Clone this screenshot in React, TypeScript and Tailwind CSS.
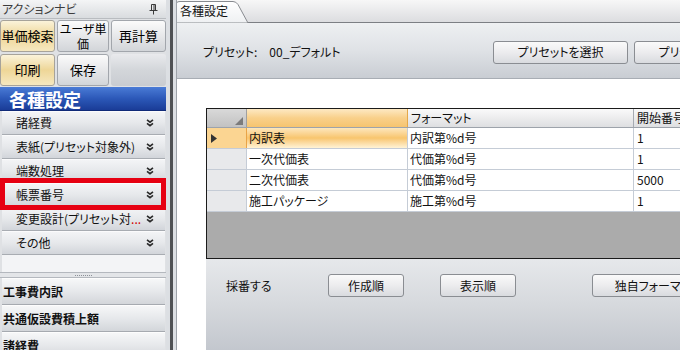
import React from "react";

const sideItems = [
  { label: "諸経費" },
  { label: "表紙(プリセット対象外)" },
  { label: "端数処理" },
  { label: "帳票番号", marked: true },
  { label: "変更設計(プリセット対", more: true },
  { label: "その他" },
];

const sections = ["工事費内訳", "共通仮設費積上額", "諸経費"];

const rows = [
  { name: "内訳表", format: "内訳第%d号", start: "1", current: true },
  { name: "一次代価表", format: "代価第%d号", start: "1" },
  { name: "二次代価表", format: "代価第%d号", start: "5000" },
  { name: "施工パッケージ", format: "施工第%d号", start: "1" },
];

function DoubleChevron() {
  return (
    <svg width="8" height="8" viewBox="0 0 8 8" className="shrink-0">
      <path d="M1 0.8 L4 3.2 L7 0.8 M1 4.3 L4 6.7 L7 4.3" stroke="#2b2b2b" strokeWidth="1.6" fill="none" />
    </svg>
  );
}

function Pin() {
  return (
    <svg width="9" height="11" viewBox="0 0 9 11">
      <path d="M2.5 0.5 H6.5 V6 M2.5 0.5 V6 M0.5 6.5 H8.5 M4.5 6.5 V10.5" stroke="#3a3a3a" strokeWidth="1" fill="none" />
      <path d="M5 1 V6" stroke="#3a3a3a" strokeWidth="1" />
    </svg>
  );
}

function NavButton({ children, gold }: { children?: React.ReactNode; gold?: boolean }) {
  return (
    <div
      className={
        gold
          ? "flex items-center justify-center rounded-[3px] border border-[#a7a39a] bg-gradient-to-b from-[#fbf3da] via-[#eed697] to-[#f6e8c0] text-[13px] leading-[14px] text-black text-center"
          : "flex items-center justify-center rounded-[3px] border border-[#a2a6ac] bg-gradient-to-b from-[#fbfbfb] via-[#e7e8ea] to-[#d2d5d9] text-[13px] leading-[14px] text-black text-center"
      }
    >
      {children}
    </div>
  );
}

function FlatButton({ children, w }: { children: React.ReactNode; w: string }) {
  return (
    <div
      className={`${w} h-[23px] shrink-0 flex items-center justify-center rounded-[3px] border border-[#8a8d92] bg-gradient-to-b from-[#fafafa] via-[#ececee] to-[#d9dbdf] text-[12px] text-[#111] whitespace-nowrap overflow-hidden`}
    >
      {children}
    </div>
  );
}

export default function App() {
  return (
    <div className="w-[680px] h-[350px] flex overflow-hidden bg-[#d6d9dd] font-['Noto_Sans_CJK_JP',sans-serif] [font-feature-settings:'palt'] text-[12px] text-[#111]">
      {/* アクションナビ */}
      <aside className="w-[166px] shrink-0 flex flex-col overflow-hidden bg-[#dfe1e4]">
        <div className="h-[19px] shrink-0 flex items-center justify-between pl-[2px] pr-[8px] bg-gradient-to-b from-[#f4f5f6] to-[#d9dcdf] border-b border-[#b9bcc0] text-[#3c3c3c]">
          <span>アクションナビ</span>
          <Pin />
        </div>
        <div className="shrink-0 grid grid-cols-[55px_52px_55px] grid-rows-[32px_32px] gap-[2px] mt-[1px]">
          <NavButton gold>単価検索</NavButton>
          <NavButton>
            <span className="text-[12px] leading-[15px]">
              ユーザ単
              <br />価
            </span>
          </NavButton>
          <NavButton>再計算</NavButton>
          <NavButton gold>印刷</NavButton>
          <NavButton>保存</NavButton>
          <div className="rounded-[3px] bg-gradient-to-b from-[#e9eaed] via-[#d3d6da] to-[#c9ccd1]" />
        </div>
        <div className="shrink-0 mt-[1px] h-[24px] flex items-center pl-[9px] bg-gradient-to-b from-[#4a7bd6] via-[#2c58b8] to-[#1a3c97] border-b border-[#102a78] text-white text-[18px] font-bold leading-none">
          各種設定
        </div>
        <div className="shrink-0 flex flex-col">
          {sideItems.map((it) => (
            <div
              key={it.label}
              className="relative shrink-0 ml-[2px] w-[163px] h-[24px] flex items-center justify-between pl-[14px] pr-[11px] bg-gradient-to-b from-[#f3f4f6] via-[#e6e8eb] to-[#d2d5da] border-t border-[#fbfbfc] border-b border-b-[#a8acb2]"
            >
              <span className="whitespace-nowrap">
                {it.label}
                {it.more && <span className="text-[#d40000]">...</span>}
              </span>
              <DoubleChevron />
              {it.marked && (
                <div className="absolute z-10 -top-[6px] -bottom-[4px] -left-[2px] -right-[1px] border-[5px] border-[#e60012]" />
              )}
            </div>
          ))}
        </div>
        <div className="shrink-0 h-[17px] bg-[#f3f4f6] ml-[2px] w-[163px]" />
        <div className="shrink-0 h-[6px] flex items-center justify-center border-y border-[#b4b8be] bg-[#e3e5e8]">
          <div className="flex gap-[1px]">
            {Array.from({ length: 9 }).map((_, i) => (
              <div key={i} className="w-[1px] h-[1px] bg-[#8d9198]" />
            ))}
          </div>
        </div>
        <div className="shrink-0 flex flex-col">
          {sections.map((s) => (
            <div
              key={s}
              className="shrink-0 ml-[2px] w-[163px] h-[27px] flex items-center pl-[1px] bg-gradient-to-b from-[#f6f7f8] via-[#e6e8eb] to-[#d3d6da] border-t border-[#fdfdfd] border-b border-b-[#a6aab0] font-bold text-[#111]"
            >
              {s}
            </div>
          ))}
        </div>
      </aside>

      {/* splitter */}
      <div className="w-[10px] shrink-0 flex justify-center bg-[#dcdfe3]">
        <div className="w-[3px] h-full bg-[#4f5154]" />
      </div>

      {/* main */}
      <main className="flex-1 min-w-0 flex flex-col overflow-hidden border-l border-[#9da2a9] bg-white">
        <div className="h-[23px] shrink-0 relative bg-gradient-to-b from-[#f7f7f7] to-[#dcdde0] border-b border-[#7c7f84]">
          <svg width="74" height="22" viewBox="0 0 74 22" className="absolute left-[-2px] top-[1px]">
            <defs>
              <linearGradient id="tabg" x1="0" y1="0" x2="0" y2="1">
                <stop offset="0" stopColor="#ffffff" />
                <stop offset="1" stopColor="#eef0f2" />
              </linearGradient>
            </defs>
            <path d="M0.5 22 V5 Q0.5 0.5 5 0.5 H58 Q61 0.5 63 3.5 L73 22 Z" fill="url(#tabg)" stroke="#878a8f" />
          </svg>
          <span className="absolute left-[3px] top-[3px] text-[12px] leading-[16px] text-[#111]">各種設定</span>
        </div>

        <div className="h-[56px] shrink-0 flex items-center pt-[3px] pl-[26px] bg-gradient-to-b from-[#eef0f2] via-[#dfe2e6] to-[#c9cdd3] border-b border-[#a8adb4]">
          <div className="w-[290px] shrink-0 whitespace-nowrap">プリセット:　00_デフォルト</div>
          <div className="flex gap-[6px] shrink-0">
            <FlatButton w="w-[135px]">プリセットを選択</FlatButton>
            <FlatButton w="w-[135px]">プリセットを保存</FlatButton>
          </div>
        </div>

        <div className="flex-1 flex flex-col pt-[29px] pl-[29px]">
          <div className="w-[520px] shrink-0 border border-[#1b1b1b] bg-[#ababab]">
            <div className="flex h-[19px] border-b border-[#9da3ab]">
              <div className="w-[40px] shrink-0 relative bg-gradient-to-b from-[#d9d9d9] to-[#c2c2c2] border-r border-[#a0a0a0]">
                <svg width="8" height="8" viewBox="0 0 8 8" className="absolute right-[3px] bottom-[2px]">
                  <path d="M8 0 V8 H0 Z" fill="#7b7b7b" />
                </svg>
              </div>
              <div className="w-[161px] shrink-0 bg-gradient-to-b from-[#fde9c3] via-[#f9d08a] to-[#f6c46f] border-r border-[#e4a84a]" />
              <div className="w-[226px] shrink-0 flex items-center pl-[3px] bg-gradient-to-b from-[#fafafa] to-[#dedfe1] border-r border-[#a6abb2]">
                フォーマット
              </div>
              <div className="flex-1 flex items-center pl-[3px] bg-gradient-to-b from-[#fafafa] to-[#dedfe1]">
                開始番号
              </div>
            </div>
            {rows.map((r) => (
              <div key={r.name} className="flex h-[21px] bg-white border-b border-[#c5ccd6]">
                <div
                  className={
                    r.current
                      ? "w-[40px] shrink-0 flex items-center pl-[4px] bg-[#fbd592] border-r border-[#e9a447]"
                      : "w-[40px] shrink-0 bg-[#e8e9eb] border-r border-[#c5ccd6]"
                  }
                >
                  {r.current && (
                    <svg width="6" height="9" viewBox="0 0 6 9">
                      <path d="M0 0 L6 4.5 L0 9 Z" fill="#333" />
                    </svg>
                  )}
                </div>
                <div
                  className={
                    r.current
                      ? "w-[161px] shrink-0 flex items-center pl-[2px] bg-gradient-to-b from-[#fde7bc] via-[#f8c56d] to-[#fff3d6] border-r border-[#c5ccd6]"
                      : "w-[161px] shrink-0 flex items-center pl-[2px] border-r border-[#c5ccd6]"
                  }
                >
                  {r.name}
                </div>
                <div className="w-[226px] shrink-0 flex items-center pl-[2px] border-r border-[#c5ccd6]">{r.format}</div>
                <div className="flex-1 flex items-center pl-[3px]">{r.start}</div>
              </div>
            ))}
            <div className="h-[46px]" />
          </div>

          <div className="flex-1 flex items-start pt-[15px] pl-[20px] bg-gradient-to-b from-[#e6e8eb] via-[#d6d9dd] to-[#c3c7ce]">
            <div className="w-[102px] shrink-0 h-[23px] flex items-center">採番する</div>
            <FlatButton w="w-[76px]">作成順</FlatButton>
            <div className="w-[36px] shrink-0" />
            <FlatButton w="w-[76px]">表示順</FlatButton>
            <div className="w-[76px] shrink-0" />
            <FlatButton w="w-[130px]">独自フォーマット</FlatButton>
          </div>
        </div>
      </main>
    </div>
  );
}
